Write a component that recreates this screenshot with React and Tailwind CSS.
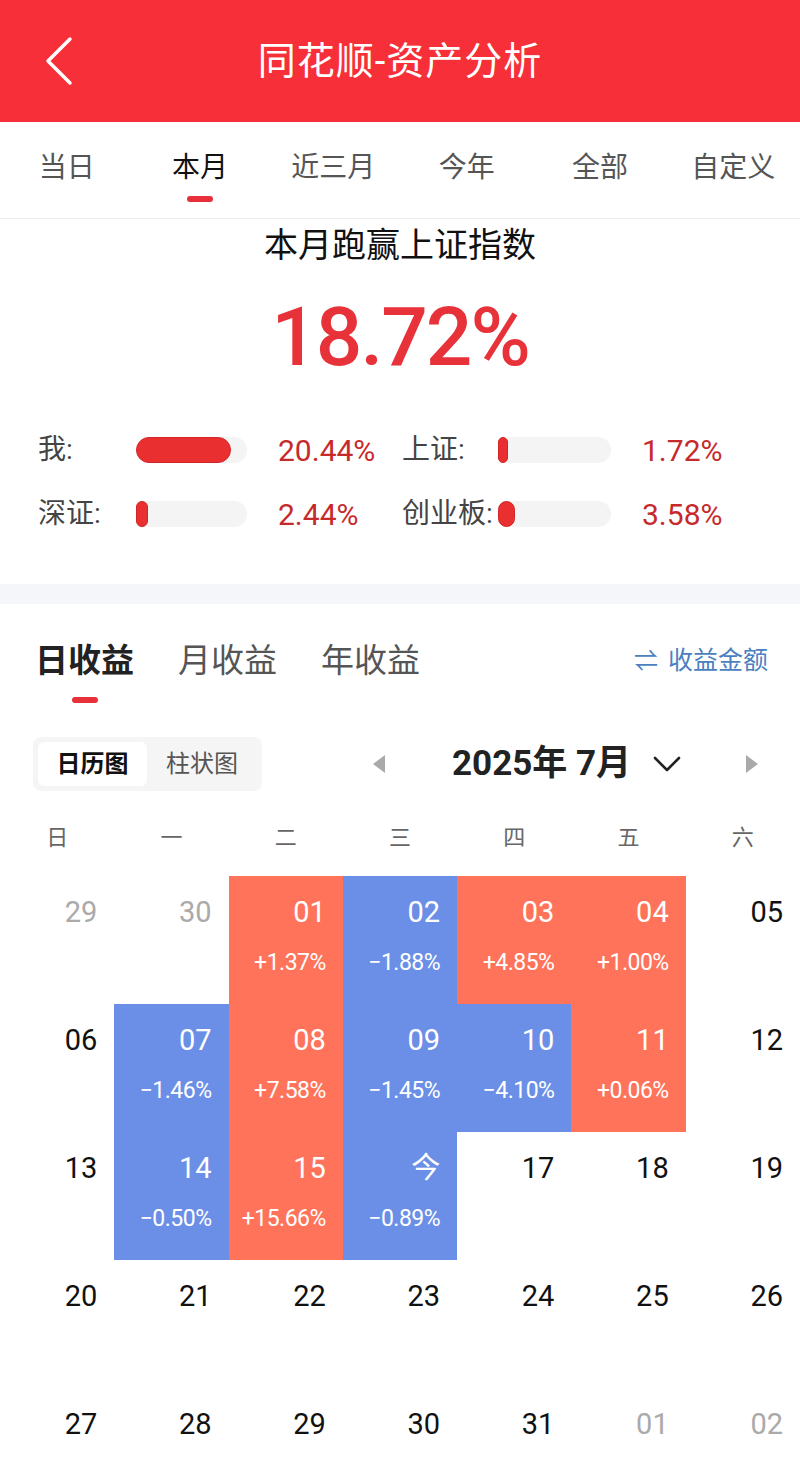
import React from "react";

const FONT = { fontFamily: "Roboto, 'Noto Sans CJK SC', sans-serif" };

const R = "bg-[#ff735a]";
const B = "bg-[#6b8fe6]";

const weeks = [
  [
    { d: "29", o: true },
    { d: "30", o: true },
    { d: "01", c: R, p: "+1.37%" },
    { d: "02", c: B, p: "−1.88%" },
    { d: "03", c: R, p: "+4.85%" },
    { d: "04", c: R, p: "+1.00%" },
    { d: "05" },
  ],
  [
    { d: "06" },
    { d: "07", c: B, p: "−1.46%" },
    { d: "08", c: R, p: "+7.58%" },
    { d: "09", c: B, p: "−1.45%" },
    { d: "10", c: B, p: "−4.10%" },
    { d: "11", c: R, p: "+0.06%" },
    { d: "12" },
  ],
  [
    { d: "13" },
    { d: "14", c: B, p: "−0.50%" },
    { d: "15", c: R, p: "+15.66%" },
    { d: "今", c: B, p: "−0.89%" },
    { d: "17" },
    { d: "18" },
    { d: "19" },
  ],
  [
    { d: "20" },
    { d: "21" },
    { d: "22" },
    { d: "23" },
    { d: "24" },
    { d: "25" },
    { d: "26" },
  ],
  [
    { d: "27" },
    { d: "28" },
    { d: "29" },
    { d: "30" },
    { d: "31" },
    { d: "01", o: true },
    { d: "02", o: true },
  ],
];

function Bar({ w, fill }) {
  return (
    <div className={`h-[26px] rounded-full bg-[#f4f4f4] ${w}`}>
      <div className={`h-full rounded-full bg-[#ea2f30] border border-[#d42526] ${fill}`} />
    </div>
  );
}

export default function App() {
  return (
    <div className="w-[800px] h-[1463px] overflow-hidden bg-white" style={FONT}>
      {/* Header */}
      <div className="h-[122px] bg-[#f72f38] grid grid-cols-[110px_1fr_110px] items-center">
        <div className="pl-[44px] flex items-center">
          <svg width="30" height="50" viewBox="0 0 30 50" fill="none">
            <path d="M26 3 L4 25 L26 47" stroke="white" strokeWidth="3.5" strokeLinecap="round" strokeLinejoin="round" />
          </svg>
        </div>
        <div className="text-center text-white text-[38px] leading-[46px] tracking-[1px]">同花顺-资产分析</div>
        <div />
      </div>

      {/* Period tabs */}
      <div className="h-[97px] grid grid-cols-6 border-b border-[#ececec]">
        {["当日", "本月", "近三月", "今年", "全部", "自定义"].map((t, i) => (
          <div key={t} className="flex flex-col items-center pt-[28px]">
            <div className={`text-[28px] leading-[36px] ${i === 1 ? "text-[#111]" : "text-[#555]"}`}>{t}</div>
            {i === 1 && <div className="mt-[10px] h-[6px] w-[26px] rounded-full bg-[#e8303a]" />}
          </div>
        ))}
      </div>

      {/* Summary */}
      <div className="pt-[3px] pb-[50px]">
        <div className="text-center text-[34px] leading-[46px] text-[#111]">本月跑赢上证指数</div>
        <div className="mt-[21px] text-center text-[82px] leading-[96px] text-[#e8323a] tracking-[-2px]" style={{ fontFamily: "Roboto, sans-serif", fontWeight: 500 }}>
          18.72%
        </div>
        <div className="mt-[45px] flex items-center h-[40px] pl-[38px] text-[28px]">
          <div className="w-[98px] text-[#444]">我:</div>
          <Bar w="w-[111px]" fill="w-[95px]" />
          <div className="w-[31px]" />
          <div className="w-[124px] text-[#c62a2b] text-[30px]">20.44%</div>
          <div className="w-[96px] text-[#444]">上证:</div>
          <Bar w="w-[113px]" fill="w-[10px]" />
          <div className="w-[31px]" />
          <div className="text-[#c62a2b] text-[30px]">1.72%</div>
        </div>
        <div className="mt-[24px] flex items-center h-[40px] pl-[38px] text-[28px]">
          <div className="w-[98px] text-[#444]">深证:</div>
          <Bar w="w-[111px]" fill="w-[12px]" />
          <div className="w-[31px]" />
          <div className="w-[124px] text-[#c62a2b] text-[30px]">2.44%</div>
          <div className="w-[96px] text-[#444]">创业板:</div>
          <Bar w="w-[113px]" fill="w-[17px]" />
          <div className="w-[31px]" />
          <div className="text-[#c62a2b] text-[30px]">3.58%</div>
        </div>
      </div>

      <div className="h-[20px] bg-[#f5f6fa]" />

      {/* Income tabs */}
      <div className="pt-[35px] pl-[35px] pr-[32px] flex items-start justify-between">
        <div className="flex gap-[44px]">
          <div className="flex flex-col items-center">
            <div className="text-[33px] leading-[44px] font-bold text-[#222]">日收益</div>
            <div className="mt-[14px] h-[6px] w-[26px] rounded-full bg-[#e8303a]" />
          </div>
          <div className="text-[33px] leading-[44px] text-[#555]">月收益</div>
          <div className="text-[33px] leading-[44px] text-[#555]">年收益</div>
        </div>
        <div className="flex items-center gap-[10px] h-[44px] text-[25px] text-[#4a7fc0]">
          <span className="text-[24px]">⇌</span>
          <span>收益金额</span>
        </div>
      </div>

      {/* Toggle + month */}
      <div className="mt-[34px] flex items-center pl-[33px]">
        <div className="w-[229px] h-[54px] rounded-[8px] bg-[#f5f5f5] p-[5px] flex">
          <div className="w-[109px] rounded-[6px] bg-white flex items-center justify-center text-[24px] font-bold text-[#111]">日历图</div>
          <div className="flex-1 flex items-center justify-center text-[24px] text-[#555]">柱状图</div>
        </div>
        <div className="ml-[110px] flex items-center">
          <svg width="14" height="20" viewBox="0 0 14 20"><path d="M13 1 L1 10 L13 19 Z" fill="#aaa" /></svg>
          <div className="ml-[66px] text-[35px] font-bold text-[#222] leading-[44px]">2025年 7月</div>
          <svg className="ml-[22px]" width="28" height="18" viewBox="0 0 28 18" fill="none">
            <path d="M2 3 L14 15 L26 3" stroke="#222" strokeWidth="2.6" strokeLinecap="round" strokeLinejoin="round" />
          </svg>
          <svg className="ml-[64px]" width="14" height="20" viewBox="0 0 14 20"><path d="M1 1 L13 10 L1 19 Z" fill="#aaa" /></svg>
        </div>
      </div>

      {/* Weekdays */}
      <div className="mt-[26px] grid grid-cols-7 h-[40px] items-center">
        {["日", "一", "二", "三", "四", "五", "六"].map((w) => (
          <div key={w} className="text-center text-[22px] text-[#666]">{w}</div>
        ))}
      </div>

      {/* Calendar grid */}
      <div className="mt-[19px]">
        {weeks.map((wk, ri) => (
          <div key={ri} className={`grid grid-cols-7 ${ri === 4 ? "h-[75px]" : "h-[128px]"}`}>
            {wk.map((c, ci) => (
              <div key={ci} className={`flex flex-col items-end pr-[17px] pt-[17px] ${c.c || ""}`}>
                <div
                  className={`text-[29px] leading-[38px] ${c.c ? "text-white" : c.o ? "text-[#aaa]" : "text-[#111]"}`}
                >
                  {c.d}
                </div>
                {c.p && <div className="mt-[18px] text-[23px] leading-[28px] text-white tracking-[-0.5px]">{c.p}</div>}
              </div>
            ))}
          </div>
        ))}
      </div>
    </div>
  );
}
